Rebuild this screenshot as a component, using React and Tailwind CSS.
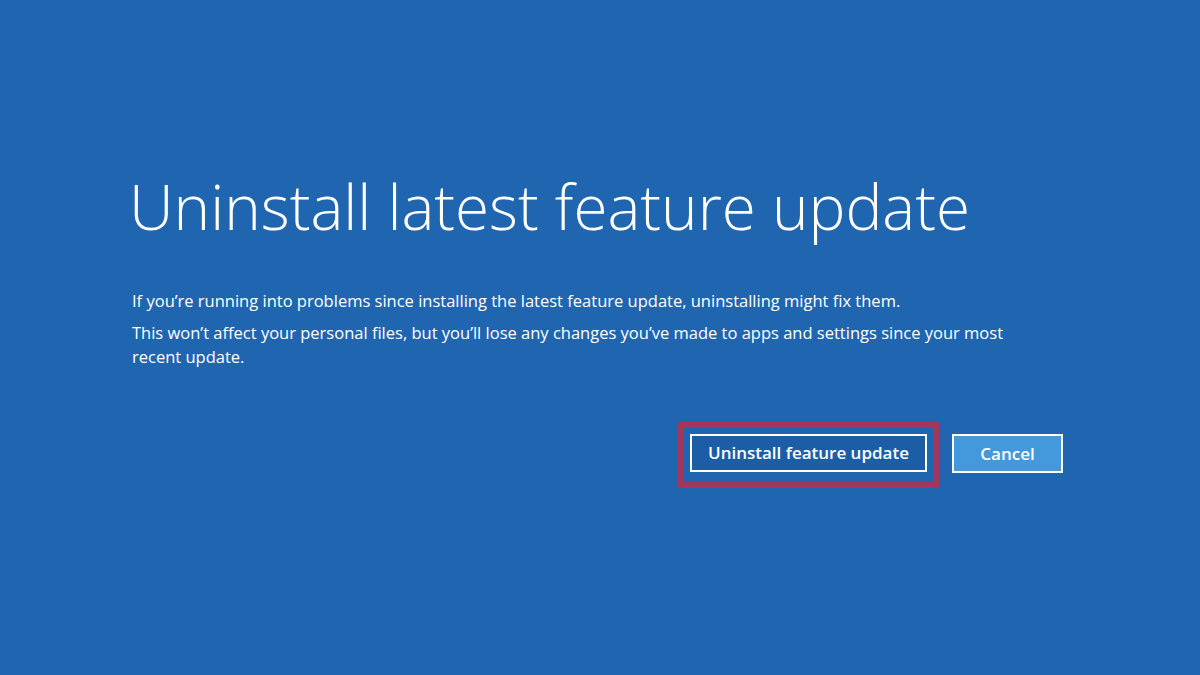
export default function App() {
  return (
    <div className="w-[1200px] h-[675px] bg-[#1f65b0] text-white overflow-hidden" style={{ fontFamily: '"Open Sans", "Noto Sans", sans-serif' }}>
      <div className="pl-[129px] pt-[166px]">
        <h1 className="text-[62px] leading-[80px] font-light">Uninstall latest feature update</h1>
        <div className="mt-[43px] text-[16.5px] leading-[24px] pl-[3px]">
          <p>If you’re running into problems since installing the latest feature update, uninstalling might fix them.</p>
          <p className="mt-[8px] w-[895px]">This won’t affect your personal files, but you’ll lose any changes you’ve made to apps and settings since your most recent update.</p>
        </div>
      </div>
      <div className="flex items-start ml-[678px] mt-[53px]">
        <div className="border-[6px] border-[#a3365f] pt-[6px] pb-[10px] px-[6px]">
          <button className="w-[237px] h-[38px] border-2 border-white bg-[#1c5ea6] text-white text-[17px] font-semibold">Uninstall feature update</button>
        </div>
        <button className="ml-[13px] mt-[12px] w-[111px] h-[39px] border-2 border-white bg-[#4499dc] text-white text-[17px] font-semibold">Cancel</button>
      </div>
    </div>
  );
}
